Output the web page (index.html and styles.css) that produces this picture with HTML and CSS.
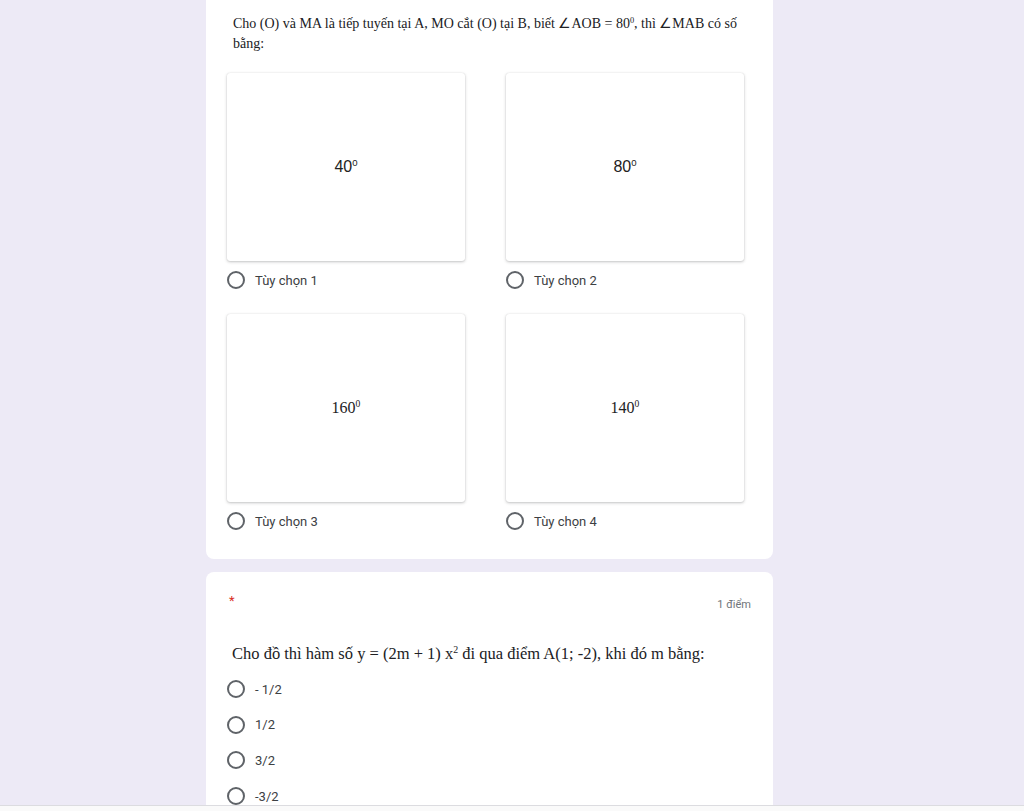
FILE: index.html
```html
<!DOCTYPE html>
<html lang="vi">
<head>
    <meta charset="UTF-8">
    <title>Bài kiểm tra</title>
    <link rel="stylesheet" href="styles.css">
</head>
<body>
    <div class="viewport">
        <div class="form">
            <div class="card card-first">
                <div class="question-serif">
                    Cho (O) và MA là tiếp tuyến tại A, MO cắt (O) tại B, biết ∠AOB = 80<sup>0</sup>, thì ∠MAB có số<br>bằng:
                </div>
                <div class="image-grid">
                    <div class="image-option">
                        <div class="image-box"><span class="sans-num">40<sup>0</sup></span></div>
                        <div class="choice"><span class="radio"></span>Tùy chọn 1</div>
                    </div>
                    <div class="image-option">
                        <div class="image-box"><span class="sans-num">80<sup>0</sup></span></div>
                        <div class="choice"><span class="radio"></span>Tùy chọn 2</div>
                    </div>
                    <div class="image-option">
                        <div class="image-box"><span class="serif-num">160<sup>0</sup></span></div>
                        <div class="choice"><span class="radio"></span>Tùy chọn 3</div>
                    </div>
                    <div class="image-option">
                        <div class="image-box"><span class="serif-num">140<sup>0</sup></span></div>
                        <div class="choice"><span class="radio"></span>Tùy chọn 4</div>
                    </div>
                </div>
            </div>

            <div class="card card-second">
                <div class="card-head">
                    <span class="required">*</span>
                    <span class="points">1 điểm</span>
                </div>
                <div class="question-big">
                    Cho đồ thì hàm số y = (2m + 1) x<sup>2</sup> đi qua điểm A(1; -2), khi đó m bằng:
                </div>
                <div class="choice-list">
                    <div class="choice"><span class="radio"></span>- 1/2</div>
                    <div class="choice"><span class="radio"></span>1/2</div>
                    <div class="choice"><span class="radio"></span>3/2</div>
                    <div class="choice"><span class="radio"></span>-3/2</div>
                </div>
            </div>
        </div>
    </div>
    <div class="bottom-strip"></div>
</body>
</html>
```

FILE: styles.css
```css
html, body {
    margin: 0;
    padding: 0;
    height: 811px;
    overflow: hidden;
}

body {
    background-color: #edeaf6;
    font-family: Roboto, 'Liberation Sans', Arial, sans-serif;
    color: #202124;
    display: flex;
    flex-direction: column;
}

.viewport {
    flex: 1;
    overflow: hidden;
}

.bottom-strip {
    height: 5px;
    background-color: #fafafa;
    border-top: 1px solid #dcdce0;
}

.form {
    width: 567px;
    margin-left: 206px;
    display: flex;
    flex-direction: column;
    gap: 13px;
}

.card {
    background-color: #fff;
    border-radius: 8px;
    box-sizing: border-box;
}

.card-first {
    padding: 14px 0 28px 21px;
    border-radius: 0 0 8px 8px;
}

.question-serif {
    font-family: 'Liberation Serif', 'Times New Roman', serif;
    font-size: 14px;
    line-height: 20px;
    padding-left: 6px;
    color: #202124;
}

.question-serif sup,
.question-big sup,
.image-box sup {
    font-size: 0.6em;
    line-height: 0;
    vertical-align: 0.65em;
}

.image-grid {
    display: grid;
    grid-template-columns: 238px 238px;
    column-gap: 41px;
    row-gap: 24px;
    margin-top: 19px;
}

.image-box {
    height: 188px;
    border-radius: 3px;
    background-color: #fff;
    box-shadow: 0 1px 3px rgba(60, 64, 67, 0.3), 0 0 1px rgba(60, 64, 67, 0.2);
    display: flex;
    align-items: center;
    justify-content: center;
}

.sans-num {
    font-family: 'Liberation Sans', Arial, sans-serif;
    font-size: 16px;
    color: #222;
}

.serif-num {
    font-family: 'Liberation Serif', 'Times New Roman', serif;
    font-size: 16px;
    color: #222;
}

.choice {
    display: flex;
    align-items: center;
    gap: 10px;
    height: 20px;
    font-size: 13px;
    color: #3c4043;
}

.image-option .choice {
    margin-top: 9px;
}

.radio {
    width: 14px;
    height: 14px;
    border: 2px solid #5f6368;
    border-radius: 50%;
    flex-shrink: 0;
}

.card-second {
    padding: 22px 22px 20px 21px;
    height: 260px;
}

.card-head {
    display: flex;
    justify-content: space-between;
    align-items: flex-start;
    padding-left: 2px;
}

.required {
    color: #d93025;
    font-size: 13px;
    line-height: 14px;
}

.points {
    font-size: 11px;
    color: #70757a;
    margin-top: 4px;
}

.question-big {
    font-family: 'Liberation Serif', 'Times New Roman', serif;
    font-size: 16.5px;
    line-height: 22px;
    margin-top: 32px;
    padding-left: 5px;
    color: #202124;
}

.choice-list {
    display: flex;
    flex-direction: column;
    gap: 15.7px;
    margin-top: 14px;
}
```
